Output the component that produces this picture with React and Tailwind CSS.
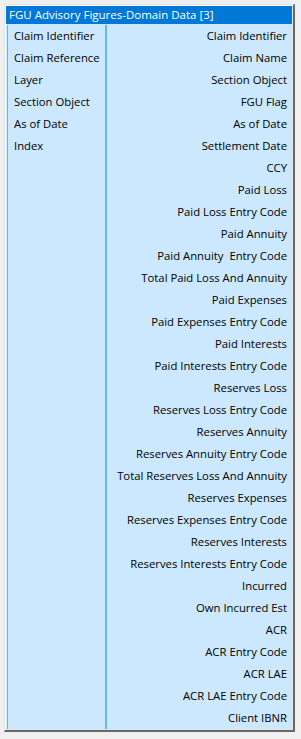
import React from 'react';

const leftItems = ['Claim Identifier', 'Claim Reference', 'Layer', 'Section Object', 'As of Date', 'Index'];

const rightItems = [
  'Claim Identifier',
  'Claim Name',
  'Section Object',
  'FGU Flag',
  'As of Date',
  'Settlement Date',
  'CCY',
  'Paid Loss',
  'Paid Loss Entry Code',
  'Paid Annuity',
  'Paid Annuity\u00a0 Entry Code',
  'Total Paid Loss And Annuity',
  'Paid Expenses',
  'Paid Expenses Entry Code',
  'Paid Interests',
  'Paid Interests Entry Code',
  'Reserves Loss',
  'Reserves Loss Entry Code',
  'Reserves Annuity',
  'Reserves Annuity Entry Code',
  'Total Reserves Loss And Annuity',
  'Reserves Expenses',
  'Reserves Expenses Entry Code',
  'Reserves Interests',
  'Reserves Interests Entry Code',
  'Incurred',
  'Own Incurred Est',
  'ACR',
  'ACR Entry Code',
  'ACR LAE',
  'ACR LAE Entry Code',
  'Client IBNR',
];

function App() {
  return (
    <div className="w-[301px] h-[739px] bg-[#f0f0f0] pt-[4px] pl-[4px] font-['Open_Sans','Noto_Sans',sans-serif] text-[11.3px] text-black">
      {/* Outer frame */}
      <div className="w-[291px] border-t border-l border-[#e3e3e3] border-r-2 border-b-2 border-r-[#696969] border-b-[#696969]">
        <div className="border-t border-l border-white border-r border-b border-r-[#e3e3e3] border-b-[#e3e3e3]">
          {/* Header */}
          <div className="h-[18px] bg-[#0078d7] text-white text-[11.5px] pl-[3px] leading-[18px] whitespace-nowrap overflow-hidden">
            FGU Advisory Figures-Domain Data [3]
          </div>

          {/* Columns */}
          <div className="flex bg-[#cce8ff] pt-px pl-px">
            <div className="w-[99px] border-l border-[#66b5ff] border-r">
              {leftItems.map((item) => (
                <div key={item} className="h-[22px] leading-[22px] pl-[6px] whitespace-nowrap">
                  {item}
                </div>
              ))}
            </div>
            <div className="flex-1 border-l border-[#66b5ff]">
              {rightItems.map((item, i) => (
                <div key={i} className="h-[22px] leading-[22px] pr-[5px] text-right whitespace-nowrap">
                  {item}
                </div>
              ))}
            </div>
          </div>
        </div>
      </div>
    </div>
  );
}

export default App;
